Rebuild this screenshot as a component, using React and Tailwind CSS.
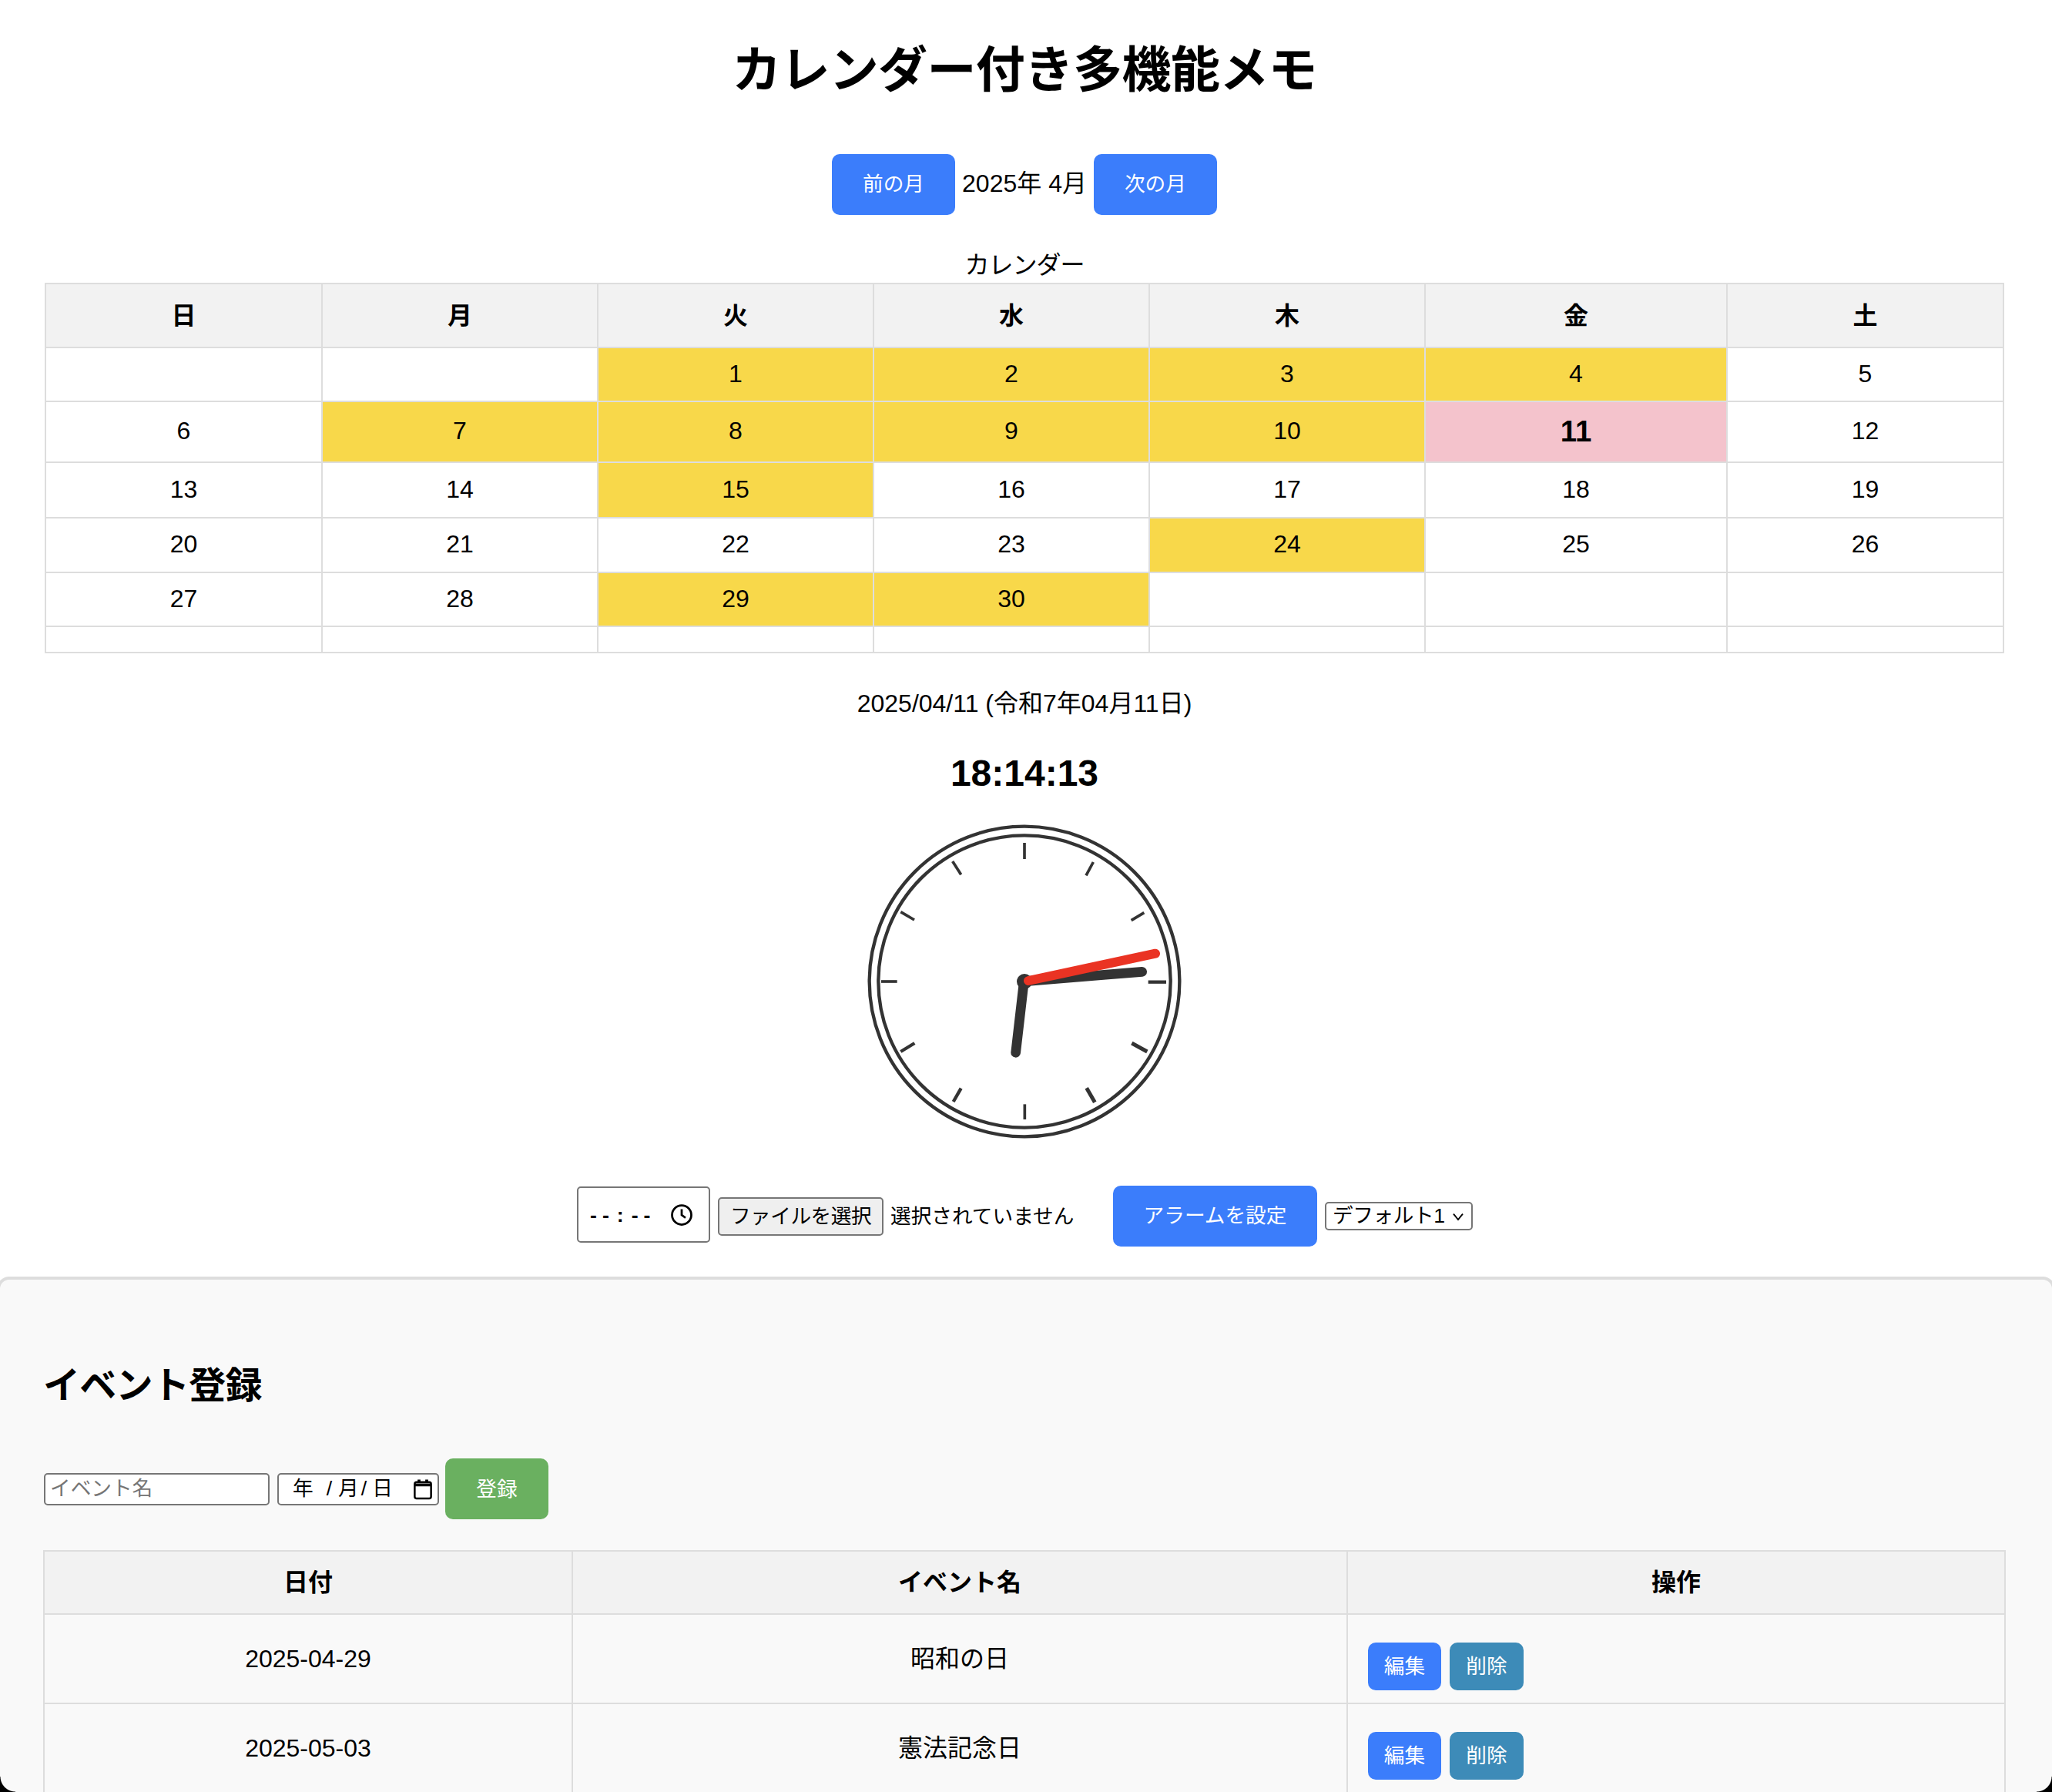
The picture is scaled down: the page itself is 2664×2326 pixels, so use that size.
import React from 'react';

const FONT = '"Liberation Sans", "Noto Sans CJK JP", sans-serif';

const colWidths = [359, 358, 358, 358, 358, 392, 359];

const calendarRows = [
  { h: 'h-[70px]', cells: ['', '', '1', '2', '3', '4', '5'] },
  { h: 'h-[79px]', cells: ['6', '7', '8', '9', '10', '11', '12'] },
  { h: 'h-[72px]', cells: ['13', '14', '15', '16', '17', '18', '19'] },
  { h: 'h-[71px]', cells: ['20', '21', '22', '23', '24', '25', '26'] },
  { h: 'h-[70px]', cells: ['27', '28', '29', '30', '', '', ''] },
  { h: 'h-[34px]', cells: ['', '', '', '', '', '', ''] },
];

const eventDays = ['1', '2', '3', '4', '7', '8', '9', '10', '15', '24', '29', '30'];

const ticks = [
  [750, 165, 750, 228, 11],
  [1018, 240, 990, 292, 11],
  [1216, 437, 1166, 467, 11],
  [1232, 707, 1302, 707, 13],
  [1168, 945, 1228, 978, 15],
  [992, 1120, 1024, 1175, 15],
  [751, 1183, 751, 1242, 11],
  [503, 1121, 473, 1173, 13],
  [322, 945, 268, 978, 13],
  [192, 705, 254, 705, 11],
  [268, 434, 321, 465, 11],
  [470, 237, 503, 289, 11],
];

const Clock = () => (
  <svg viewBox="0 0 1500 1350" className="block w-[500px] h-[450px]">
    <circle cx="750" cy="705" r="604" fill="none" stroke="#333" strokeWidth="13" />
    <circle cx="750" cy="705" r="569" fill="none" stroke="#333" strokeWidth="13" />
    {ticks.map(([x1, y1, x2, y2, w]) => (
      <line key={`${x1}-${y1}`} x1={x1} y1={y1} x2={x2} y2={y2} stroke="#333" strokeWidth={w} />
    ))}
    <circle cx="750" cy="705" r="30" fill="#333" />
    <line x1="748" y1="705" x2="716" y2="982" stroke="#333" strokeWidth="38" strokeLinecap="round" />
    <line x1="765" y1="703" x2="1208" y2="667" stroke="#333" strokeWidth="38" strokeLinecap="round" />
    <line x1="765" y1="702" x2="1260" y2="596" stroke="#ea3323" strokeWidth="36" strokeLinecap="round" />
  </svg>
);

const BlueButton = ({ children, className = '' }) => (
  <button className={`bg-[#3b7dfb] text-white text-[26.67px] leading-[39px] rounded-[10px] ${className}`}>
    {children}
  </button>
);

const CalendarTable = () => (
  <table className="w-[2542px] table-fixed border-collapse mx-auto">
    <caption className="text-[32px] leading-[46px] h-[46px] text-center tracking-[-1px]">カレンダー</caption>
    <colgroup>
      {colWidths.map((w, i) => (
        <col key={i} style={{ width: w }} />
      ))}
    </colgroup>
    <thead>
      <tr className="h-[83px] bg-[#f2f2f2]">
        {['日', '月', '火', '水', '木', '金', '土'].map((d) => (
          <th key={d} className="border-2 border-[#ddd] p-0 text-[32px] font-bold">{d}</th>
        ))}
      </tr>
    </thead>
    <tbody>
      {calendarRows.map((row, r) => (
        <tr key={r} className={row.h}>
          {row.cells.map((c, i) => {
            if (c === '11') {
              return (
                <td key={i} className="border-2 border-[#ddd] p-0 pb-[2px] text-center text-[38.4px] font-bold bg-[#f4c3cc]">{c}</td>
              );
            }
            const marked = eventDays.includes(c);
            return (
              <td key={i} className={`border-2 border-[#ddd] p-0 pb-[3px] text-center text-[32px] ${marked ? 'bg-[#f8d84a]' : ''}`}>{c}</td>
            );
          })}
        </tr>
      ))}
    </tbody>
  </table>
);

const AlarmRow = () => (
  <div className="flex items-center h-[79px] pl-[749px] text-[26.67px]">
    <div className="w-[173px] h-[73px] mb-[4px] border-2 border-[#767676] rounded-[5px] bg-white flex items-center justify-between pl-[15px] pr-[20px]">
      <span className="tracking-[7px] font-bold whitespace-nowrap">--<span className="mx-[3px]">:</span>--</span>
      <svg viewBox="0 0 24 24" className="w-[30px] h-[30px]" fill="none" stroke="#000" strokeWidth="2.2">
        <circle cx="12" cy="12" r="10" />
        <path d="M12 6v6l4 3" />
      </svg>
    </div>
    <div className="ml-[10px] w-[215px] h-[50px] border-2 border-[#767676] rounded-[5px] bg-[#efefef] flex items-center justify-center tracking-[-0.5px]">
      ファイルを選択
    </div>
    <span className="ml-[9px] w-[289px]">選択されていません</span>
    <BlueButton className="w-[265px] h-[79px]">アラームを設定</BlueButton>
    <div className="ml-[10px] w-[192px] h-[37px] border-2 border-[#767676] rounded-[5px] bg-white flex items-center pl-[8px] leading-none whitespace-nowrap tracking-[-0.4px]">
      デフォルト1
      <svg viewBox="0 0 12 12" className="w-[16px] h-[16px] ml-[9px]" fill="none" stroke="#000" strokeWidth="1.4">
        <path d="M1.5 3.5 6 9l4.5-5.5" />
      </svg>
    </div>
  </div>
);

const EventForm = () => (
  <div className="flex items-center h-[79px] mt-[59px] text-[26.67px]">
    <div className="w-[293px] h-[42px] border-2 border-[#767676] rounded-[5px] bg-white flex items-center pl-[6px] text-[#757575] leading-none">
      イベント名
    </div>
    <div className="ml-[10px] w-[210px] h-[42px] border-2 border-[#767676] rounded-[5px] bg-white flex items-center pl-[18px] pr-[4px] leading-none whitespace-nowrap">
      <span>年</span>
      <span className="ml-[17px]">/</span>
      <span className="ml-[8px]">月</span>
      <span className="ml-[3px]">/</span>
      <span className="ml-[7px]">日</span>
      <svg viewBox="0 0 24 24" className="w-[30px] h-[30px] ml-auto" fill="none" stroke="#000" strokeWidth="2">
        <rect x="3.5" y="4.5" width="17" height="17" rx="2" />
        <path d="M3.5 7.5h17M8 2v3M16 2v3" strokeWidth="3" />
      </svg>
    </div>
    <button className="ml-[8px] w-[134px] h-[79px] bg-[#6ab060] text-white rounded-[10px]">登録</button>
  </div>
);

const EventTable = () => {
  const events = [
    ['2025-04-29', '昭和の日'],
    ['2025-05-03', '憲法記念日'],
  ];
  return (
    <table className="w-[2546px] table-fixed border-collapse mt-[40px] ml-[-1px]">
      <colgroup>
        <col className="w-[686px]" />
        <col className="w-[1006px]" />
        <col className="w-[854px]" />
      </colgroup>
      <thead>
        <tr className="h-[82px] bg-[#f2f2f2]">
          {['日付', 'イベント名', '操作'].map((h) => (
            <th key={h} className="border-2 border-[#ddd] p-0 text-[32px] font-bold">{h}</th>
          ))}
        </tr>
      </thead>
      <tbody>
        {events.map(([date, name]) => (
          <tr key={date} className="h-[116px]">
            <td className="border-2 border-[#ddd] p-0 text-center text-[32px]">{date}</td>
            <td className="border-2 border-[#ddd] p-0 text-center text-[32px]">{name}</td>
            <td className="border-2 border-[#ddd] p-0 pl-[26px] pt-[20px]">
              <div className="flex gap-[11px]">
                <BlueButton className="w-[95px] h-[62px]">編集</BlueButton>
                <button className="w-[96px] h-[62px] bg-[#3d8bb8] text-white text-[26.67px] rounded-[10px]">削除</button>
              </div>
            </td>
          </tr>
        ))}
      </tbody>
    </table>
  );
};

export default function App() {
  return (
    <div className="relative h-[2326px] overflow-hidden bg-white text-black" style={{ fontFamily: FONT }}>
      <h1 className="text-[64px] font-bold text-center leading-[92px] pt-[45px] tracking-[-0.7px] ml-[-4px]">カレンダー付き多機能メモ</h1>

      <div className="flex items-center justify-center gap-[9px] mt-[63px] ml-[-4px]">
        <BlueButton className="w-[160px] h-[79px]">前の月</BlueButton>
        <span className="text-[32px] pb-[3px]">2025年 4月</span>
        <BlueButton className="w-[160px] h-[79px]">次の月</BlueButton>
      </div>

      <div className="mt-[42px] ml-[-4px]">
        <CalendarTable />
      </div>

      <p className="mt-[42px] text-[32px] leading-[46px] text-center ml-[-4px]">2025/04/11 (令和7年04月11日)</p>
      <p className="mt-[40px] text-[48px] font-bold leading-[56px] text-center ml-[-4px]">18:14:13</p>

      <div className="flex justify-center ml-[-4px] mt-[7px]">
        <Clock />
      </div>

      <div className="mt-[50px]">
        <AlarmRow />
      </div>

      <section className="mt-[39px] mx-[-4px] h-[800px] bg-[#f9f9f9] border-4 border-[#ddd] rounded-[16px] pl-[57px]">
        <h2 className="text-[48px] font-bold leading-[70px] pt-[103px] box-content tracking-[-0.7px] ml-[-1px]">イベント登録</h2>
        <EventForm />
        <EventTable />
      </section>

      {/* screenshot window corners */}
      <div className="absolute left-0 bottom-0 w-[20px] h-[20px] bg-[radial-gradient(circle_at_100%_0%,transparent_19px,#000_20px)]" />
      <div className="absolute right-0 bottom-0 w-[20px] h-[20px] bg-[radial-gradient(circle_at_0%_0%,transparent_19px,#000_20px)]" />
    </div>
  );
}
